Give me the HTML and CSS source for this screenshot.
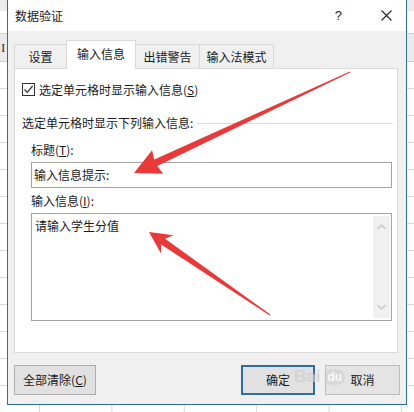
FILE: index.html
```html
<!DOCTYPE html>
<html lang="zh-CN">
<head>
<meta charset="utf-8">
<title>数据验证</title>
<link rel="stylesheet" href="styles.css">
</head>
<body>
<div class="sheet">
  <div class="formula"><div class="formula-top"></div></div>
  <div class="colhead"><span class="colletter">I</span></div>
  <div class="grid"></div>
</div>

<div class="dialog">
  <div class="titlebar">
    <span class="title">数据验证</span>
    <span class="help">?</span>
    <svg class="close" width="11" height="11" viewBox="0 0 11 11"><path d="M0.5 0.5 L10.5 10.5 M10.5 0.5 L0.5 10.5" stroke="#222" stroke-width="1.1" fill="none"/></svg>
  </div>
  <div class="body">
    <div class="tabs">
      <div class="tab t1">设置</div>
      <div class="tab t2 active">输入信息</div>
      <div class="tab t3">出错警告</div>
      <div class="tab t4">输入法模式</div>
    </div>
    <div class="panel">
      <div class="checkrow">
        <span class="checkbox"><svg width="11" height="11" viewBox="0 0 11 11"><path d="M1.5 5.5 L4.3 8.4 L9.6 2" stroke="#333" stroke-width="1.2" fill="none"/></svg></span>
        <span>选定单元格时显示输入信息(<u>S</u>)</span>
      </div>
      <div class="grouprow">
        <span>选定单元格时显示下列输入信息:</span>
        <span class="rule"></span>
      </div>
      <div class="fields">
        <div class="label lbl1">标题(<u>T</u>):</div>
        <div class="input">输入信息提示:</div>
        <div class="label lbl2">输入信息(<u>I</u>):</div>
        <div class="textarea">
          <div class="tatext">请输入学生分值</div>
          <div class="scroll">
            <svg width="9" height="6" viewBox="0 0 9 6"><path d="M0.5 5 L4.5 1 L8.5 5" stroke="#c4c4c4" stroke-width="1.2" fill="none"/></svg>
            <svg width="9" height="6" viewBox="0 0 9 6"><path d="M0.5 1 L4.5 5 L8.5 1" stroke="#c4c4c4" stroke-width="1.2" fill="none"/></svg>
          </div>
        </div>
      </div>
    </div>
    <div class="buttons">
      <div class="btn clear">全部清除(<u>C</u>)</div>
      <div class="spacer"></div>
      <div class="btn ok">确定</div>
      <div class="btn cancel">取消</div>
    </div>
  </div>
</div>

<svg class="arrows" width="414" height="412" viewBox="0 0 414 412">
  <polygon fill="#e83a3a" points="134,173 163.1,173.8 157.3,166 350.2,72.5 349.8,71.5 154.3,159.6 152.1,150.2"/>
  <polygon fill="#e83a3a" points="149,232 173.4,235.3 165.1,238.7 270.3,314.6 269.7,315.4 161.1,244.5 161,253.5"/>
</svg>

<div class="watermark"><span class="wm-bai">Bai</span><span class="wm-du">du</span></div>
</body>
</html>
```

FILE: styles.css
```css
* { box-sizing: border-box; }

html, body {
  margin: 0;
  padding: 0;
}

body {
  width: 414px;
  height: 412px;
  overflow: hidden;
  position: relative;
  background: #ffffff;
  font-family: "Noto Sans CJK SC", "Noto Sans", sans-serif;
  font-size: 12px;
  color: #1a1a1a;
}

u { text-decoration: underline; text-underline-offset: 1px; }

/* spreadsheet behind the dialog */
.sheet {
  width: 414px;
  height: 412px;
  display: flex;
  flex-direction: column;
}

.formula {
  height: 34px;
  background: #ffffff;
  border-bottom: 1px solid #cfcfcf;
}

.formula-top {
  height: 11px;
  background: #ececec;
}

.colhead {
  height: 28px;
  background: #ebebeb;
  border-bottom: 1px solid #cfcfcf;
  display: flex;
  align-items: center;
  padding-left: 1px;
}

.colletter {
  font-family: "Liberation Serif", serif;
  font-size: 13px;
  color: #333;
}

.grid {
  flex: 1;
  background-image:
    linear-gradient(to right, #d8d8d8 1px, transparent 1px),
    linear-gradient(to bottom, #d8d8d8 1px, transparent 1px);
  background-size: 72.4px 100%, 100% 27px;
  background-position: 39px 0, 0 26px;
}

/* dialog */
.dialog {
  position: absolute;
  left: 7px;
  top: -1px;
  width: 400px;
  height: 406px;
  border: 1px solid #2f6f94;
  background: #f0f0f0;
  display: flex;
  flex-direction: column;
}

.titlebar {
  height: 31px;
  background: #ffffff;
  display: flex;
  align-items: center;
  padding-left: 7px;
  padding-right: 14px;
  flex-shrink: 0;
}

.title {
  flex: 1;
  font-size: 12px;
  line-height: 16px;
}

.help {
  font-family: "Liberation Sans", sans-serif;
  font-size: 13px;
  color: #222;
  margin-right: 39px;
}

.close { display: block; }

.body {
  flex: 1;
  padding: 9px 8px 0 6px;
  display: flex;
  flex-direction: column;
}

.tabs {
  height: 28px;
  display: flex;
  align-items: flex-end;
  position: relative;
  z-index: 1;
}

.tab {
  height: 24px;
  border: 1px solid #d9d9d9;
  border-bottom: none;
  background: #f0f0f0;
  display: flex;
  align-items: center;
  justify-content: center;
  line-height: 16px;
  padding-top: 1px;
  margin-left: -1px;
}

.tab.t1 { width: 53px; margin-left: 0; }
.tab.t2 { width: 70px; }
.tab.t3 { width: 65px; }
.tab.t4 { width: 75px; }

.tab.active {
  height: 29px;
  margin-bottom: -1px;
  background: #ffffff;
  padding-bottom: 4px;
}

.panel {
  height: 285px;
  background: #ffffff;
  border: 1px solid #d9d9d9;
  display: flex;
  flex-direction: column;
}

.checkrow {
  margin-top: 14px;
  height: 13px;
  padding-left: 7px;
  display: flex;
  align-items: center;
  gap: 4px;
  line-height: 16px;
}

.checkbox {
  width: 13px;
  height: 13px;
  border: 1px solid #333;
  background: #fff;
  display: flex;
  align-items: center;
  justify-content: center;
}

.checkbox svg { display: block; }

.grouprow {
  margin-top: 20px;
  height: 14px;
  padding-left: 7px;
  padding-right: 4px;
  display: flex;
  align-items: center;
  line-height: 16px;
}

.rule {
  flex: 1;
  height: 1px;
  background: #dcdcdc;
  margin-left: 4px;
}

.fields {
  padding-left: 16px;
  padding-right: 5px;
  display: flex;
  flex-direction: column;
}

.label {
  height: 16px;
  line-height: 16px;
}

.lbl1 { margin-top: 12px; }
.lbl2 { margin-top: 5px; }

.input {
  margin-top: 4px;
  height: 26px;
  border: 1px solid #a3a3a3;
  padding-left: 2px;
  line-height: 16px;
  display: flex;
  align-items: center;
}

.textarea {
  margin-top: 4px;
  height: 108px;
  border: 1px solid #a3a3a3;
  display: flex;
}

.tatext {
  flex: 1;
  padding: 4px 0 0 3px;
  line-height: 16px;
}

.scroll {
  width: 17px;
  margin: 2px 1px 2px 0;
  background: #f0f0f0;
  display: flex;
  flex-direction: column;
  justify-content: space-between;
  align-items: center;
  padding: 8px 0 8px;
}

.scroll svg { display: block; }

.buttons {
  margin-top: 12px;
  margin-right: -2px;
  display: flex;
  height: 30px;
}

.spacer { flex: 1; }

.btn {
  height: 30px;
  background: #e1e1e1;
  border: 1px solid #adadad;
  display: flex;
  align-items: center;
  justify-content: center;
  line-height: 16px;
}

.btn.clear { width: 82px; }

.btn.ok {
  width: 74px;
  border: 2px solid #2d6fa3;
}

.btn.cancel {
  width: 75px;
  margin-left: 10px;
  background: #e4e4e4;
  border-color: #bdbdbd;
}

/* annotation overlay */
.arrows {
  position: absolute;
  left: 0;
  top: 0;
  pointer-events: none;
}

.watermark {
  position: absolute;
  left: 294px;
  top: 367px;
  display: flex;
  align-items: center;
  gap: 4px;
  font-family: "Liberation Sans", sans-serif;
  font-weight: bold;
  pointer-events: none;
}

.wm-bai {
  font-size: 17px;
  color: rgba(205, 205, 205, 0.75);
}

.wm-du {
  font-size: 12px;
  color: rgba(255, 255, 255, 0.9);
  background: rgba(205, 205, 205, 0.55);
  border-radius: 8px;
  padding: 1px 3px;
}
```
